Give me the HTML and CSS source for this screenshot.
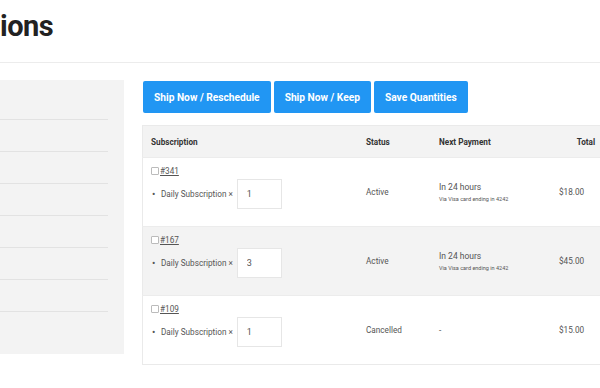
FILE: index.html
```html
<!DOCTYPE html>
<html lang="en">

<head>
	<meta charset="UTF-8">
	<meta name="viewport" content="width=device-width, initial-scale=1.0">
	<title>Subscriptions</title>
	<link rel="stylesheet" href="styles.css">
</head>

<body>
	<header class="page-header">
		<h1>ions</h1>
	</header>
	<div class="content">
		<aside class="sidebar">
			<ul class="nav-list">
				<li></li>
				<li></li>
				<li></li>
				<li></li>
				<li></li>
				<li></li>
				<li></li>
			</ul>
		</aside>
		<main class="main">
			<div class="actions">
				<button>Ship Now / Reschedule</button>
				<button>Ship Now / Keep</button>
				<button>Save Quantities</button>
			</div>
			<table class="subs">
				<thead>
					<tr>
						<th class="col-sub">Subscription</th>
						<th class="col-status">Status</th>
						<th class="col-pay">Next Payment</th>
						<th class="col-total">Total</th>
					</tr>
				</thead>
				<tbody>
					<tr>
						<td class="col-sub">
							<div class="sub-id"><span class="check"></span><a href="#">#341</a></div>
							<ul class="items">
								<li><span class="dot">•</span>Daily Subscription ×<input class="qty" type="text" value="1"></li>
							</ul>
						</td>
						<td>Active</td>
						<td>
							<div class="when">In 24 hours</div>
							<div class="via">Via Visa card ending in 4242</div>
						</td>
						<td>$18.00</td>
					</tr>
					<tr>
						<td class="col-sub">
							<div class="sub-id"><span class="check"></span><a href="#">#167</a></div>
							<ul class="items">
								<li><span class="dot">•</span>Daily Subscription ×<input class="qty" type="text" value="3"></li>
							</ul>
						</td>
						<td>Active</td>
						<td>
							<div class="when">In 24 hours</div>
							<div class="via">Via Visa card ending in 4242</div>
						</td>
						<td>$45.00</td>
					</tr>
					<tr>
						<td class="col-sub">
							<div class="sub-id"><span class="check"></span><a href="#">#109</a></div>
							<ul class="items">
								<li><span class="dot">•</span>Daily Subscription ×<input class="qty" type="text" value="1"></li>
							</ul>
						</td>
						<td>Cancelled</td>
						<td>-</td>
						<td>$15.00</td>
					</tr>
				</tbody>
			</table>
		</main>
	</div>
</body>

</html>
```

FILE: styles.css
```css
body {
	margin: 0;
	font-family: Roboto, 'Liberation Sans', sans-serif;
	background: #fff;
	color: #555;
	width: 600px;
	height: 388px;
	overflow: hidden;
}

.page-header {
	height: 63px;
	border-bottom: 1px solid #ececec;
	box-sizing: border-box;
	padding-top: 9px;
}

.page-header h1 {
	margin: 0;
	font-size: 29px;
	line-height: 34px;
	font-weight: 700;
	color: #222;
	letter-spacing: -0.5px;
}

.content {
	display: flex;
	padding-top: 17px;
}

.sidebar {
	width: 124px;
	height: 274px;
	flex-shrink: 0;
	background: #f3f3f3;
}

.nav-list {
	list-style: none;
	margin: 0;
	padding: 8px 16px 0 0;
}

.nav-list li {
	height: 31px;
	border-bottom: 1px solid #e2e2e2;
}

.main {
	margin-left: 18px;
	flex-shrink: 0;
}

.actions {
	display: flex;
	gap: 3px;
	margin-left: 1px;
	margin-top: 1px;
}

.actions button {
	height: 32px;
	padding: 0 11px;
	background: #2196f3;
	color: #fff;
	border: none;
	border-radius: 2px;
	font-family: Roboto, 'Liberation Sans', sans-serif;
	font-size: 10.2px;
	font-weight: 700;
	cursor: pointer;
}

.subs {
	margin-top: 12px;
	width: 480px;
	border-collapse: collapse;
	border: 1px solid #eaeaea;
	font-size: 8.2px;
}

.subs th {
	background: #f3f3f3;
	height: 31px;
	text-align: left;
	font-weight: 700;
	color: #333;
	padding: 0 8px;
}

.subs td {
	padding: 0 8px;
	vertical-align: middle;
	border-top: 1px solid #ececec;
}

.subs tbody tr:nth-child(even) td {
	background: #f3f3f3;
}

.subs .col-sub {
	width: 199px;
	padding-left: 8px;
}

.subs td.col-sub {
	padding-top: 7px;
	padding-bottom: 17px;
	height: 44px;
}

.subs .col-status {
	width: 57px;
}

.subs .col-pay {
	width: 104px;
}

.subs th.col-total {
	text-align: center;
}

.sub-id {
	display: flex;
	align-items: center;
	height: 12px;
}

.check {
	width: 6px;
	height: 6px;
	border: 1px solid #bbb;
	border-radius: 1px;
	margin-right: 1px;
	background: #fff;
}

.sub-id a {
	color: #555;
	text-decoration: underline;
}

.items {
	list-style: none;
	margin: 2px 0 0;
	padding: 0;
}

.items li {
	display: flex;
	align-items: center;
}

.dot {
	width: 10px;
	font-size: 10px;
	padding-left: 1px;
	box-sizing: border-box;
}

.qty {
	width: 45px;
	height: 30px;
	box-sizing: border-box;
	margin-left: 4px;
	border: 1px solid #e6e6e6;
	background: #fff;
	padding: 0 9px;
	font-family: Roboto, 'Liberation Sans', sans-serif;
	font-size: 9px;
	color: #555;
}

.when {
	font-size: 8.5px;
	margin-bottom: 4px;
}

.via {
	font-size: 5.5px;
}
```
